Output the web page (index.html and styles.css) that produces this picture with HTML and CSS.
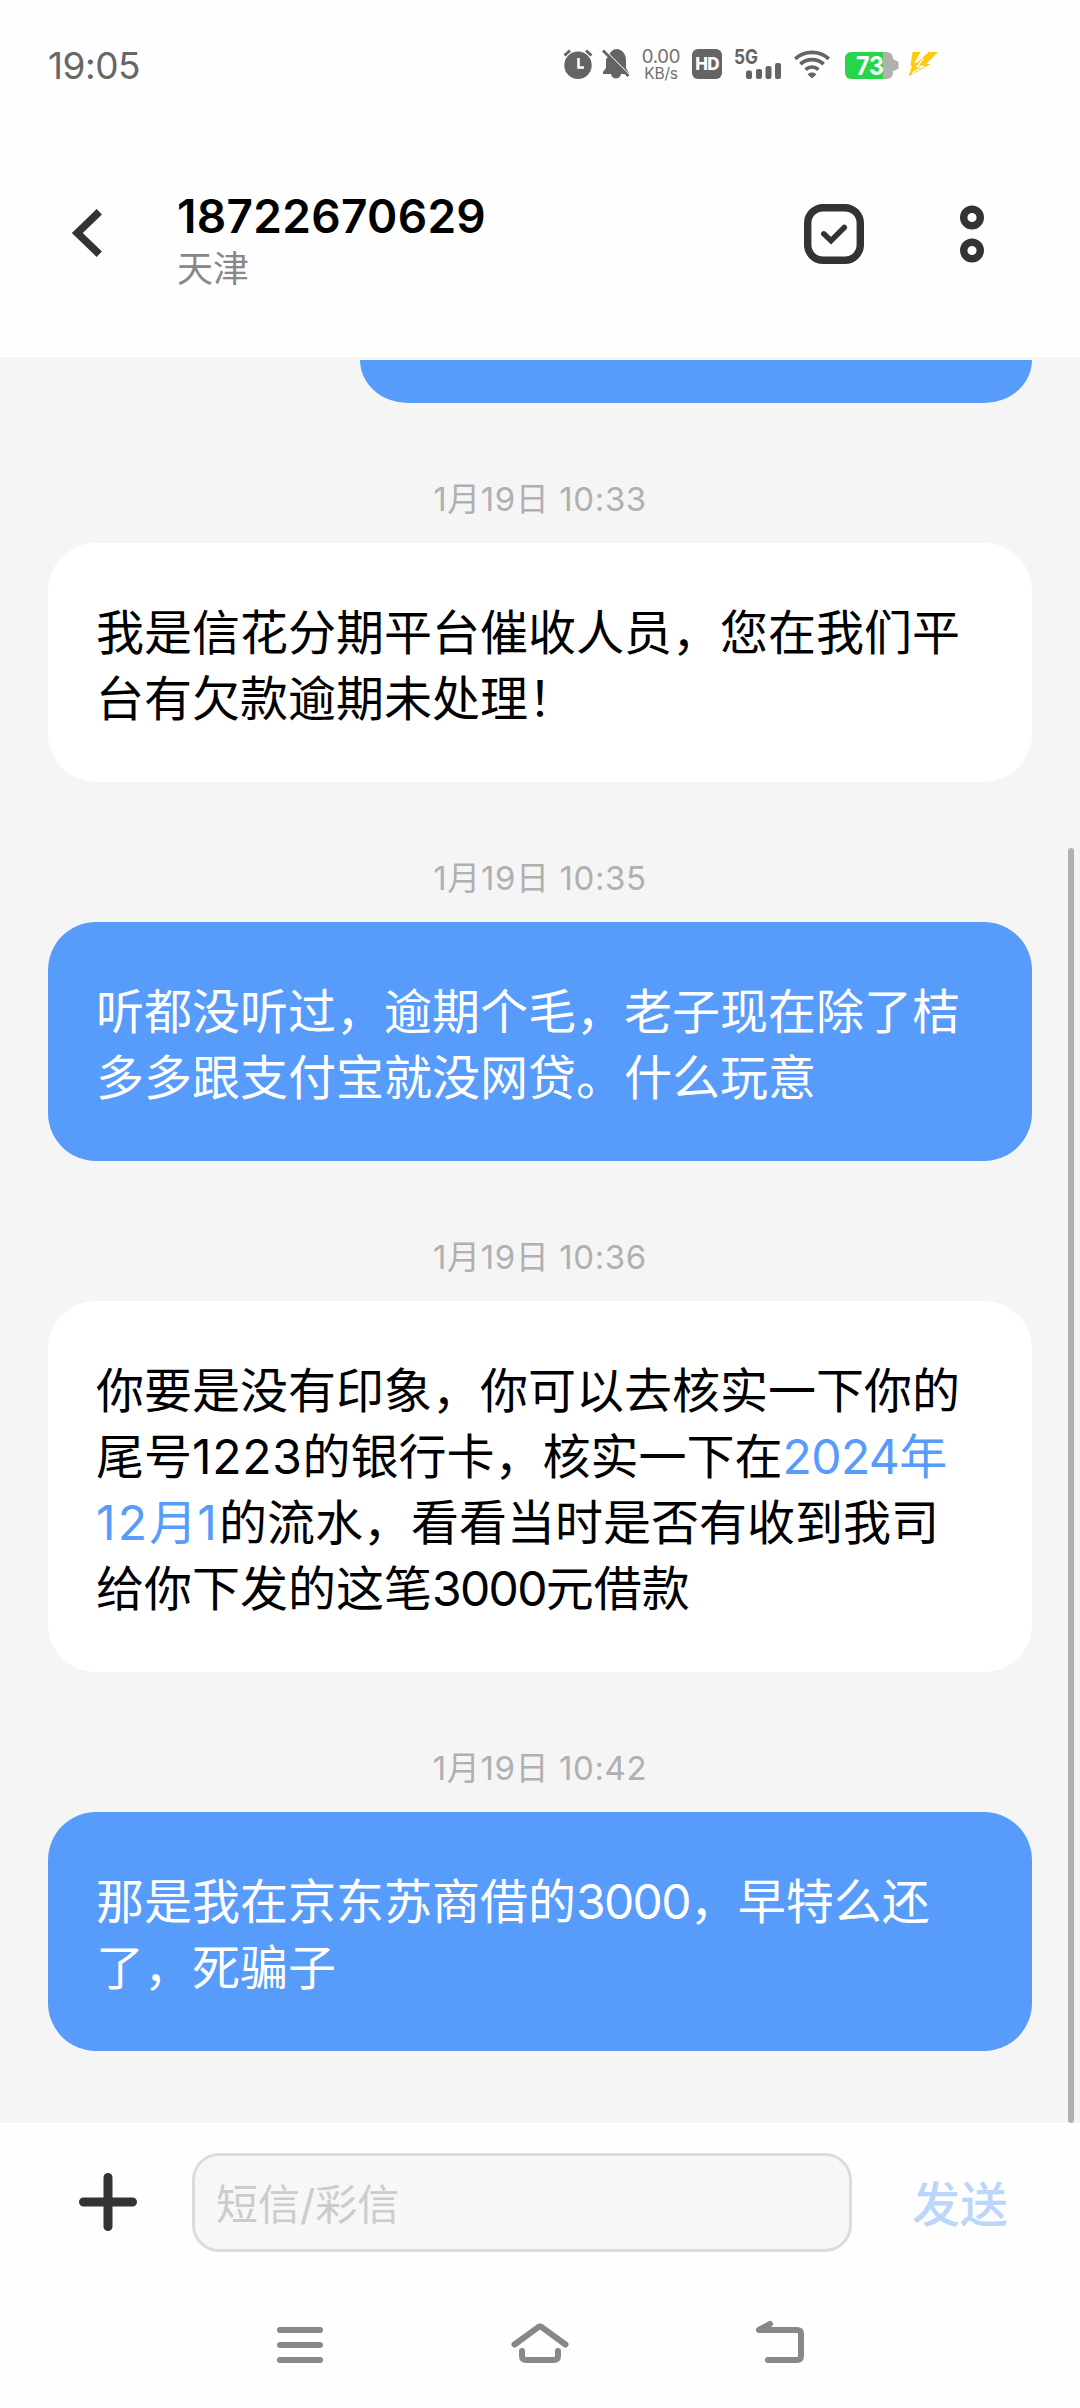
FILE: index.html
```html
<!DOCTYPE html>
<html lang="zh-CN">
<head>
<meta charset="utf-8">
<title>18722670629</title>
<link rel="stylesheet" href="styles.css">
</head>
<body>
<div class="screen">
  <div class="status-bar">
    <span class="clock">19:05</span>
    <div class="status-icons">
      <svg class="ic-alarm" width="30" height="32" viewBox="0 0 30 32">
        <circle cx="15" cy="17.3" r="13.7" fill="#646464"/>
        <path d="M1.500 7.500 L7 2.500 M23 2.500 L28.500 7.500" stroke="#646464" stroke-width="3" fill="none"/>
        <path d="M15.500 10 V19.500 H21" stroke="#fff" stroke-width="2.600" fill="none"/>
      </svg>
      <svg class="ic-bell" width="28" height="32" viewBox="0 0 28 32">
        <path d="M6 9 C8 4 11 1 14.500 1 C20 1 24 6 24 12 V20 L27 25 V26 H19 C18 32 10 32 9 26 H1 V24 L4 20 V11 Z" fill="#646464"/>
        <path d="M-1 -0.500 L29 29.500" stroke="#fff" stroke-width="3"/>
        <path d="M1 2.500 L26.500 28" stroke="#646464" stroke-width="2.800"/>
      </svg>
      <div class="net-speed"><span>0.00</span><span class="unit">KB/s</span></div>
      <div class="hd"><span>HD</span></div>
      <svg class="ic-signal" width="48" height="32" viewBox="0 0 48 32">
        <text x="0" y="15.500" class="net-type" textLength="24" lengthAdjust="spacingAndGlyphs">5G</text>
        <rect x="12" y="22.500" width="6" height="8.500" rx="2" fill="#646464"/>
        <rect x="22" y="21" width="6" height="10" rx="2" fill="#646464"/>
        <rect x="31.500" y="18" width="6" height="13" rx="2" fill="#646464"/>
        <rect x="41" y="15" width="6" height="16" rx="2" fill="#646464"/>
      </svg>
      <svg class="ic-wifi" width="36" height="32" viewBox="0 0 36 32">
        <g fill="none" stroke="#646464" stroke-width="3.700">
          <path d="M1.200 10.800 C10.500 2.200 25.500 2.200 34.800 10.800"/>
          <path d="M6.400 16.200 C13 10.200 23 10.200 29.600 16.200"/>
          <path d="M11.500 21.600 C15.500 18.200 20.500 18.200 24.500 21.600"/>
        </g>
        <path d="M13.500 26.300 C16.200 23.800 19.800 23.800 22.500 26.300 L18 30.500 Z" fill="#646464"/>
      </svg>
      <svg class="ic-battery" width="54" height="32" viewBox="0 0 54 32">
        <path d="M38 4 H42 a6 6 0 0 1 6 6 V11 L52 13 Q53.500 13.500 53.500 15 V20 Q53.500 21 52 21.500 L48 23 V25 a6 6 0 0 1 -6 6 H38 Z" fill="#b0b0b0"/>
        <path d="M6 4 H38 V31 H6 a6 6 0 0 1 -6 -6 V10 a6 6 0 0 1 6 -6 Z" fill="#27d549"/>
        <text x="11" y="26.500" class="battery-level" textLength="28" lengthAdjust="spacingAndGlyphs">73</text>
      </svg>
      <svg class="ic-bolt" width="31" height="32" viewBox="0 0 31 32">
        <path d="M4.500 4 H12.500 L6.500 14.500 L9 15 L20.500 4 H30 L18 16 H22.500 L0.500 28.500 L4 18 L2.500 17.500 Z" fill="#fdcb0a"/>
        <path d="M15.500 10.500 L9 18.500 H15 L4 25" stroke="#fff" stroke-width="1.300" fill="none"/>
      </svg>
    </div>
  </div>

  <header class="header">
    <svg class="back" width="40" height="56" viewBox="0 0 40 56"><path d="M31.300 6.800 L9.300 28 L31.300 49.200" fill="none" stroke="#333" stroke-width="7.600"/></svg>
    <div class="contact">
      <div class="number">18722670629</div>
      <div class="place">天津</div>
    </div>
    <svg class="select" width="60" height="60" viewBox="0 0 60 60" fill="none" stroke="#333">
      <rect x="3.700" y="3.700" width="52.600" height="52.600" rx="15.500" stroke-width="7.400"/>
      <path d="M19.800 29.800 L27 36.700 L40.300 23.500" stroke-width="5.500" stroke-linecap="round"/>
    </svg>
    <svg class="more" width="24" height="60" viewBox="0 0 24 60" fill="none" stroke="#333" stroke-width="7.400">
      <circle cx="12" cy="13.500" r="8.300"/><circle cx="12" cy="46.500" r="8.300"/>
    </svg>
  </header>

  <main class="thread">
    <div class="bubble sent clipped"></div>
    <div class="time">1月19日 10:33</div>
    <div class="bubble received">我是信花分期平台催收人员，您在我们平<br>台有欠款逾期未处理！</div>
    <div class="time">1月19日 10:35</div>
    <div class="bubble sent">听都没听过，逾期个毛，老子现在除了桔<br>多多跟支付宝就没网贷。什么玩意</div>
    <div class="time">1月19日 10:36</div>
    <div class="bubble received">你要是没有印象，你可以去核实一下你的<br>尾号<span class="num-card">1223</span>的银行卡，核实一下在<span class="link"><span class="num-year">2024</span>年<br><span class="num-day">12</span>月<span class="num-day">1</span></span>的流水，看看当时是否有收到我司<br>给你下发的这笔<span class="num-sum">3000</span>元借款</div>
    <div class="time">1月19日 10:42</div>
    <div class="bubble sent">那是我在京东苏商借的<span class="num-sum">3000</span>，早特么还<br>了，死骗子</div>
    <div class="scrollbar"></div>
  </main>

  <footer class="composer">
    <svg class="plus" width="58" height="58" viewBox="0 0 58 58"><path d="M4.500 29 H53.500 M29 4.500 V53.500" stroke="#333" stroke-width="9" stroke-linecap="round"/></svg>
    <div class="field">短信/彩信</div>
    <div class="send">发送</div>
  </footer>

  <nav class="nav">
    <svg width="60" height="48" viewBox="0 0 60 48"><path d="M10 12 H50 M10 27 H50 M10 42 H50"/></svg>
    <svg width="60" height="48" viewBox="0 0 60 48"><path d="M4.500 26.500 L28 9.300 Q30 8 32 9.300 L55.500 26.500 M12 33 V38 Q12 42 16 42 H44 Q48 42 48 38 V33"/></svg>
    <svg width="60" height="48" viewBox="0 0 60 48"><path d="M20 6 L9 12 H47 Q51 12 51 16 V38 Q51 42 47 42 H18"/></svg>
  </nav>
</div>
</body>
</html>
```
FILE: styles.css
```css
* { box-sizing: border-box; }

body {
  margin: 0;
  background: #fff;
  font-family: Inter, "Noto Sans CJK SC", sans-serif;
}

svg { display: block; overflow: visible; flex: none; }

.screen {
  width: 1080px;
  height: 2408px;
  display: flex;
  flex-direction: column;
  background: #fefefe;
}

/* status bar */
.status-bar {
  height: 128px;
  padding: 0 141px 0 48px;
  display: flex;
  justify-content: space-between;
  align-items: center;
}

.clock { font-size: 37px; line-height: 44px; color: #666; margin-top: 3px; letter-spacing: -0.5px; }

.status-icons { display: flex; height: 32px; }

.ic-bell { margin-left: 9px; }

.net-speed {
  width: 38px;
  margin-left: 12px;
  display: flex;
  flex-direction: column;
  align-items: center;
  font-size: 18.5px;
  line-height: 16px;
  color: #6e6e6e;
  letter-spacing: -0.2px;
}
.net-speed .unit { margin-top: 3px; font-size: 15.500px; line-height: 13px; letter-spacing: -0.2px; }

.hd {
  width: 30px;
  height: 30px;
  margin: 1px 0 0 12px;
  border-radius: 6px;
  background: #646464;
  color: #fff;
  font-size: 17px;
  font-weight: 800;
  line-height: 30px;
  text-align: center;
  letter-spacing: -0.8px;
}

.ic-signal { margin-left: 12px; }
.net-type { font-size: 20px; font-weight: 700; fill: #646464; }
.ic-wifi { margin-left: 12px; }
.ic-battery { margin-left: 15px; }
.battery-level { font-size: 26px; font-weight: 700; fill: #fff; }
.ic-bolt { margin-left: 9px; }

/* header */
.header {
  height: 229px;
  padding: 0 96px 0 68px;
  display: flex;
  align-items: flex-start;
}
.back { margin-top: 77px; }
.contact { flex: 1; margin: 60px 0 0 69px; }
.number { font-size: 46px; font-weight: 600; line-height: 56px; color: #000; letter-spacing: 0.3px; }
.place { margin-top: 1px; font-size: 36px; line-height: 48px; color: #888; }
.select { margin-top: 76px; }
.more { margin: 76px 0 0 96px; }

/* message thread */
.thread {
  position: relative;
  height: 1766px;
  padding: 3px 48px 0;
  background: #f5f5f5;
  display: flex;
  flex-direction: column;
}

.bubble {
  padding: 57px 48px 50px;
  border-radius: 48px;
  font-size: 48px;
  line-height: 66px;
  white-space: nowrap;
}
.received { background: #fff; color: #000; }
.sent { background: #579bfb; color: #fff; }
.clipped {
  align-self: flex-end;
  width: 672px;
  height: 43px;
  padding: 0;
  border-radius: 0 0 48px 48px / 0 0 43px 43px;
}
.num-card { letter-spacing: 0.7px; }
.num-year { letter-spacing: -0.6px; }
.num-day { letter-spacing: 2.2px; }
.num-sum { letter-spacing: -1.7px; }
.link { color: #579bfb; }

.time {
  height: 140px;
  padding-top: 73px;
  font-size: 33px;
  line-height: 46px;
  text-align: center;
  letter-spacing: 0.6px;
  color: #b0b0b0;
}

.scrollbar {
  position: absolute;
  right: 6px;
  top: 491px;
  bottom: 0;
  width: 6px;
  border-radius: 3px;
  background: #b0b0b0;
}

/* composer */
.composer {
  height: 159px;
  padding: 30px 72px 0 79px;
  display: flex;
  align-items: flex-start;
}
.plus { margin-top: 20px; }
.field {
  width: 660px;
  height: 99px;
  margin-left: 55px;
  padding-left: 21px;
  border: 3px solid #dcdcdc;
  border-radius: 27px;
  background: #f7f7f7;
  color: #ccc;
  font-size: 42px;
  line-height: 98px;
}
.send { margin-left: 60px; font-size: 48px; font-weight: 500; line-height: 103px; color: #bbd5fb; }

/* system navigation */
.nav {
  flex: 1;
  padding-top: 36px;
  display: flex;
  justify-content: center;
  gap: 180px;
}
.nav path {
  fill: none;
  stroke: #888;
  stroke-width: 6;
  stroke-linecap: round;
  stroke-linejoin: round;
}
```
